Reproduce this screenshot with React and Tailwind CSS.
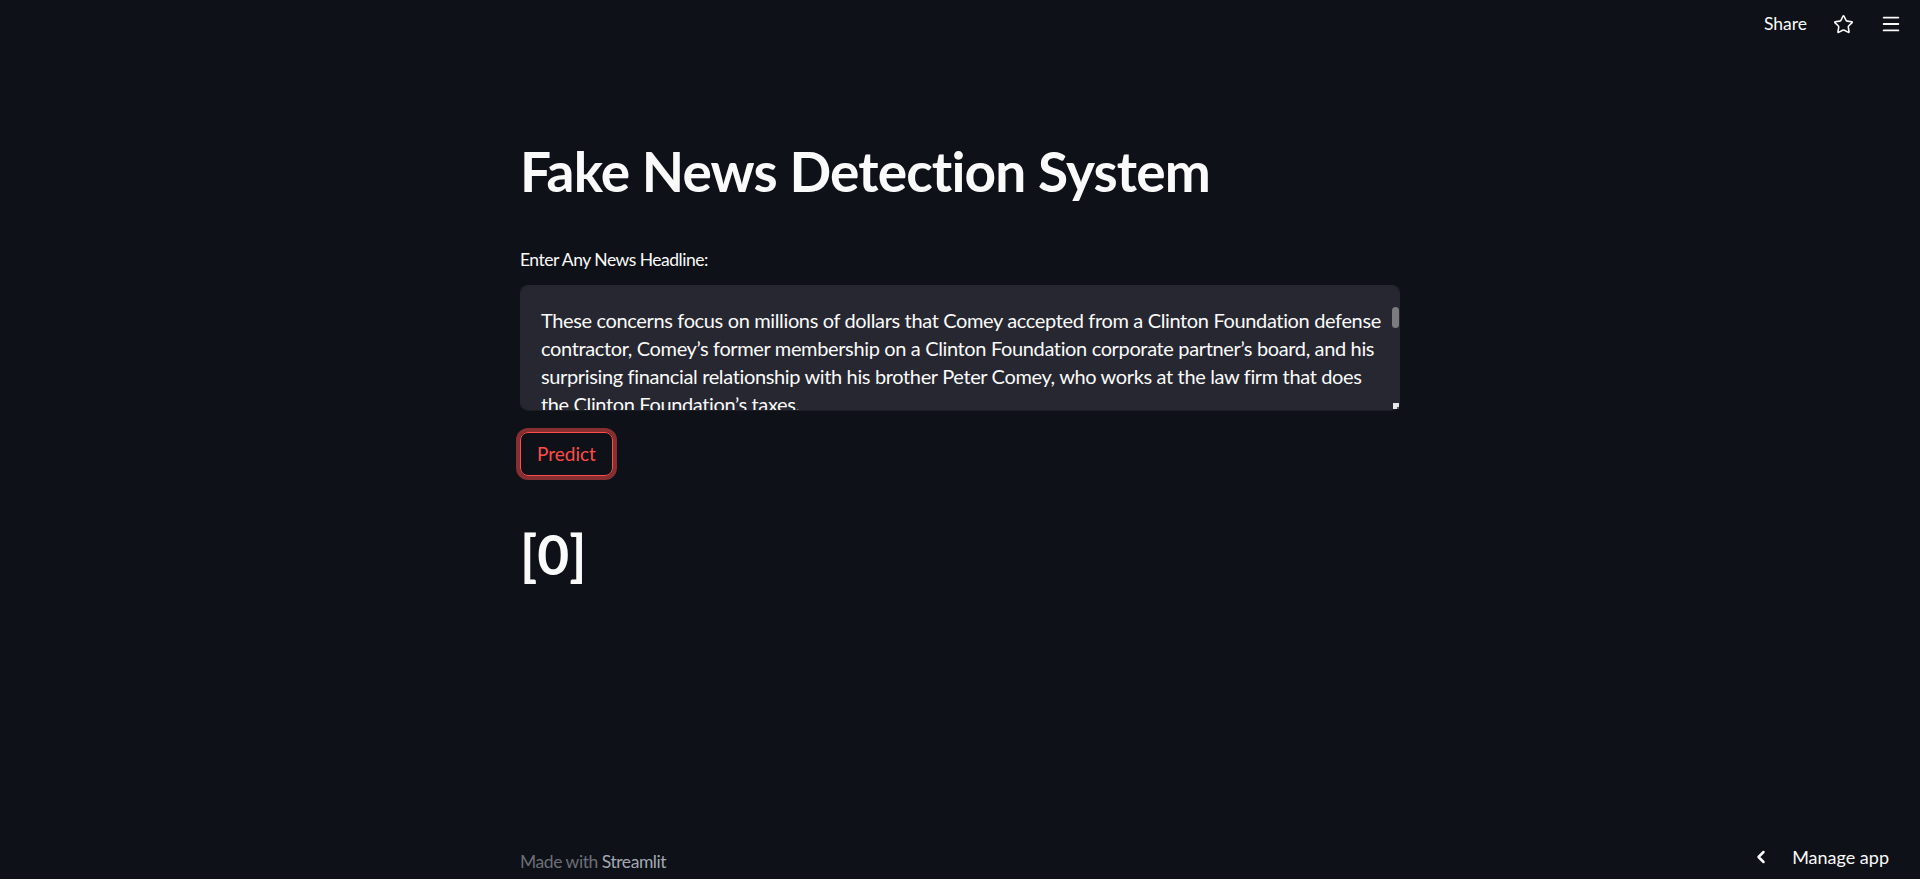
import { Star, Menu, ChevronLeft } from 'lucide-react';

const article =
  "These concerns focus on millions of dollars that Comey accepted from a Clinton Foundation defense contractor, Comey’s former membership on a Clinton Foundation corporate partner’s board, and his surprising financial relationship with his brother Peter Comey, who works at the law firm that does the Clinton Foundation’s taxes.\nThose concerns are now front and center, as Comey leads the investigation into the Clinton Foundation and Hillary Clinton’s use of a private email server while she was Secretary of State.\nCritics have asked whether these ties create a conflict of interest, and whether the director should step aside from the inquiry until the questions are resolved.\nThe FBI declined to comment on the matter.\nComey has said the bureau follows the facts wherever they lead.";

const font = { fontFamily: 'Lato, "Noto Sans", sans-serif' };

export default function App() {
  return (
    <div
      style={font}
      className="relative flex min-h-screen flex-col bg-[#0e1117] text-[#fafafa]"
    >
      {/* top bar */}
      <header className="flex h-[48px] items-center justify-end gap-[26px] pr-[18px]">
        <span className="text-[17.5px] leading-none">Share</span>
        <Star size={21} strokeWidth={1.8} />
        <Menu size={22} strokeWidth={2} />
      </header>

      <main className="mx-auto flex w-[880px] flex-col pt-[90px]">
        <h1 className="text-[55px] font-bold leading-[1.2] tracking-[-0.85px]">
          Fake News Detection System
        </h1>

        <label className="mt-[45px] text-[17.5px] leading-[1.2] tracking-[-0.5px]">
          Enter Any News Headline:
        </label>

        <div className="relative mt-[15px]">
          <textarea
            defaultValue={article}
            spellCheck={false}
            className="block h-[126px] w-full resize-none rounded-[8px] border border-[#262730] border-b-[#1c1d24] bg-[#262730] py-[20px] pl-[20px] pr-[12px] text-[20px] leading-[28px] tracking-[-0.36px] text-[#fafafa] outline-none"
            style={font}
          />
          {/* scrollbar thumb + resize grip */}
          <div className="pointer-events-none absolute right-[1px] top-[22px] h-[21px] w-[7px] rounded-full bg-[#7b7b80]" />
          <div className="pointer-events-none absolute bottom-[2px] right-[1px] flex h-[6px] w-[6px] items-end justify-end bg-[#e8e8ea]">
            <div className="h-[2px] w-[2px] bg-[#555]" />
          </div>
        </div>

        <div className="mt-[21px]">
          <button className="h-[44px] rounded-[8px] border border-[#ff4b4b] bg-transparent px-[16px] text-[19px] text-[#ff4b4b] shadow-[0_0_0_4px_rgba(255,75,75,0.5)]">
            Predict
          </button>
        </div>

        <h1 className="mt-[45px] text-[55px] font-bold leading-[1.2]">[0]</h1>
      </main>

      <footer className="mx-auto mt-auto w-[880px] pb-[7px]">
        <p className="text-[17.5px] leading-[1.2] tracking-[-0.45px] text-[#6c6f77]">
          Made with <span className="text-[#a3a8b4]">Streamlit</span>
        </p>
      </footer>

      <div className="absolute bottom-[12px] right-[31px] flex items-center gap-[21px] text-[18px] leading-none">
        <ChevronLeft size={20} strokeWidth={3} />
        <span>Manage app</span>
      </div>
    </div>
  );
}
